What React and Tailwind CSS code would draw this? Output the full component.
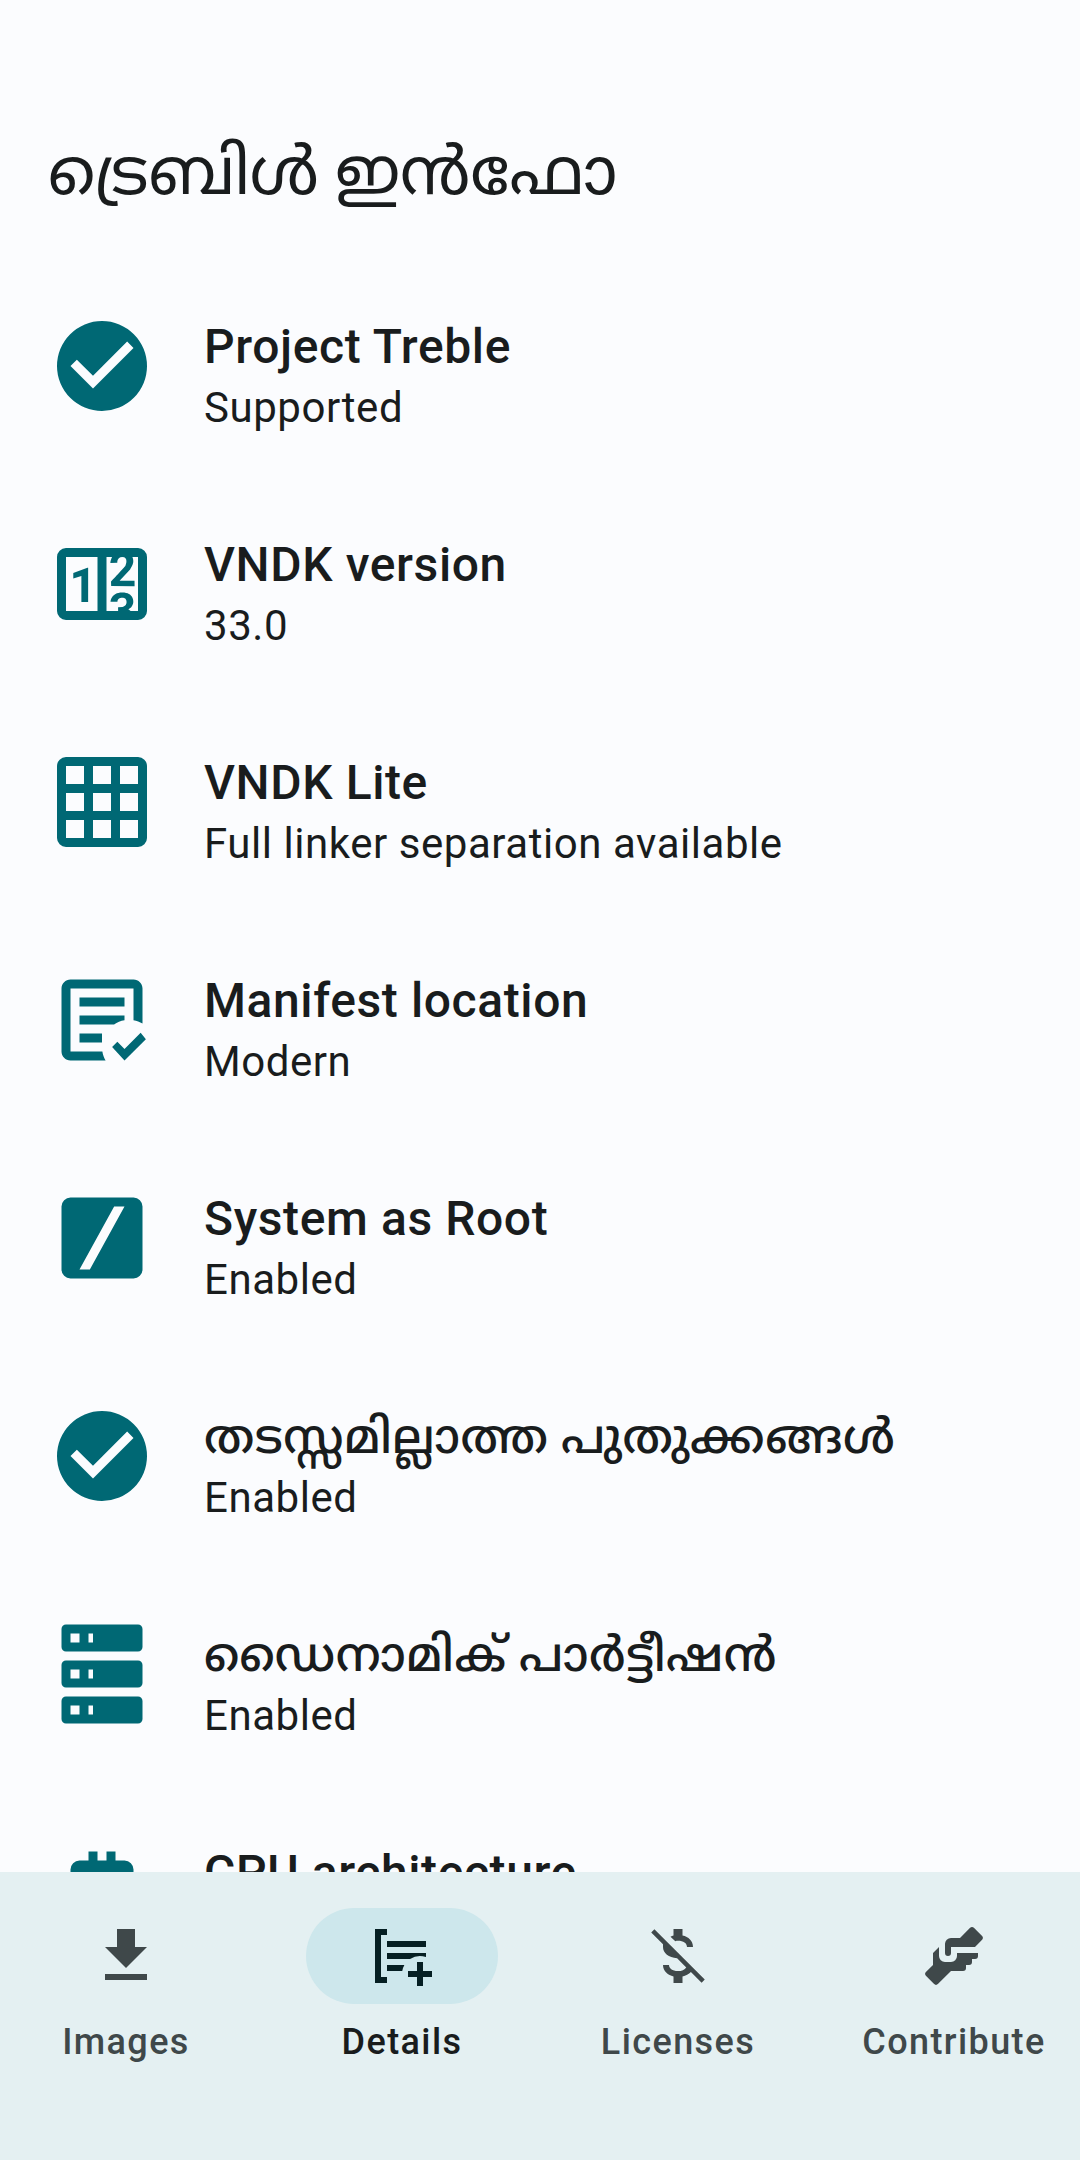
const COUNTER =
  'M4,4H20A2,2 0 0,1 22,6V18A2,2 0 0,1 20,20H4A2,2 0 0,1 2,18V6A2,2 0 0,1 4,4M4,6V18H11V6H4M20,18V6H18.76C19,6.54 18.95,7.07 18.95,7.13C18.88,7.8 18.41,8.5 18.24,8.75L15.91,11.3L19.23,11.28L19.24,12.5L14.04,12.47L14,11.47C14,11.47 17.05,8.24 17.2,7.95C17.34,7.67 17.91,6 16.5,6C15.27,6.05 15.41,7.3 15.41,7.3L13.87,7.31C13.87,7.31 13.88,6.65 14.25,6H13V18H15.58L15.57,17.14L16.54,17.13C16.54,17.13 17.45,16.97 17.46,16.08C17.5,15.08 16.65,15.08 16.5,15.08C16.37,15.08 15.43,15.13 15.43,15.95H13.91C13.91,15.95 13.95,13.89 16.5,13.89C19.1,13.89 18.96,15.91 18.96,15.91C18.96,15.91 19,17.16 17.85,17.63L18.37,18H20M8.92,16H7.42V10.2L5.62,10.76V9.53L8.76,8.41H8.92V16Z';
const CHECK =
  'M12 2A10 10 0 1 0 12 22A10 10 0 1 0 12 2M10 17L5 12L6.41 10.59L10 14.17L17.59 6.58L19 8Z';
const GRID =
  'M4 2H20A2 2 0 0 1 22 4V20A2 2 0 0 1 20 22H4A2 2 0 0 1 2 20V4A2 2 0 0 1 4 2M4 4V8H8V4ZM10 4V8H14V4ZM16 4V8H20V4ZM4 10V14H8V10ZM10 10V14H14V10ZM16 10V14H20V10ZM4 16V20H8V16ZM10 16V20H14V16ZM16 16V20H20V16Z';
const MANIFEST =
  'M17 21L14.25 18L15.41 16.84L17 18.43L20.59 14.84L21.75 16.25L17 21M12.8 21H5C3.89 21 3 20.11 3 19V5C3 3.89 3.89 3 5 3H19C20.11 3 21 3.89 21 5V12.8C20.39 12.45 19.72 12.2 19 12.08V5H5V19H12.08C12.2 19.72 12.45 20.39 12.8 21M12 17H7V15H12M14.68 13H7V11H17V12.08C16.15 12.22 15.37 12.54 14.68 13M17 9H7V7H17';
const SLASH =
  'M5 3H19A2 2 0 0 1 21 5V19A2 2 0 0 1 19 21H5A2 2 0 0 1 3 19V5A2 2 0 0 1 5 3M7 19H9.3L17 5H14.7Z';
const SERVER =
  'M4,1H20A1,1 0 0,1 21,2V6A1,1 0 0,1 20,7H4A1,1 0 0,1 3,6V2A1,1 0 0,1 4,1M4,9H20A1,1 0 0,1 21,10V14A1,1 0 0,1 20,15H4A1,1 0 0,1 3,14V10A1,1 0 0,1 4,9M4,17H20A1,1 0 0,1 21,18V22A1,1 0 0,1 20,23H4A1,1 0 0,1 3,22V18A1,1 0 0,1 4,17M9,5H10V3H9V5M9,13H10V11H9V13M9,21H10V19H9V21M5,3V5H7V3H5M5,11V13H7V11H5M5,19V21H7V19H5Z';
const CHIP =
  'M9 3H11V5H13V3H15V5H17A2 2 0 0 1 19 7V9H21V11H19V13H21V15H19V17A2 2 0 0 1 17 19H15V21H13V19H11V21H9V19H7A2 2 0 0 1 5 17V15H3V13H5V11H3V9H5V7A2 2 0 0 1 7 5H9Z';

const DOWNLOAD = 'M5 20H19V18H5V20M19 9H15V3H9V9H5L12 16L19 9Z';
const DETAILS =
  'M3 3H7V5H5V19H7V21H3ZM7 7H20V9H7ZM7 11H20V12.34A6 6 0 0 0 14.68 13H7ZM7 15H12.8A6 6 0 0 0 12.08 17H7ZM17 14H19V17H22V19H19V22H17V19H14V17H17Z';
const MONEY_OFF =
  'M10.5 3H13.5V5.2C15.5 5.6 17 7 17 9H15C15 7.7 13.8 6.9 12 6.9C11.7 6.9 11.4 6.95 11.1 7.05L9.5 5.6C9.8 5.4 10.2 5.3 10.5 5.2ZM4.13 3.08L3.08 4.13L7 8.05V9C7 11.15 8.9 12.4 11.7 12.75L14.75 15.8C14.2 16.6 13.3 17 12 17C10 17 9 16.1 9 15H7C7 17.1 8.7 18.4 10.5 18.8V21H13.5V18.8C14.6 18.6 15.6 18.1 16.3 17.35L19.87 20.92L20.92 19.87Z';
const HANDS =
  'M11 6H14L17.29 2.7A1 1 0 0 1 18.71 2.7L21.29 5.29A1 1 0 0 1 21.29 6.7L19 9H11V11A1 1 0 0 1 10 12A1 1 0 0 1 9 11V8A2 2 0 0 1 11 6M5 11V15L2.71 17.29A1 1 0 0 0 2.71 18.7L5.29 21.29A1 1 0 0 0 6.71 21.29L11 17H15A1 1 0 0 0 16 16V15H17A1 1 0 0 0 18 14V13H19A1 1 0 0 0 20 12V11H13V12A2 2 0 0 1 11 14H9A2 2 0 0 1 7 12V9L5 11Z';

const rows = [
  { icon: CHECK, title: 'Project Treble', value: 'Supported' },
  { icon: COUNTER, title: 'VNDK version', value: '33.0' },
  { icon: GRID, title: 'VNDK Lite', value: 'Full linker separation available' },
  { icon: MANIFEST, title: 'Manifest location', value: 'Modern' },
  { icon: SLASH, title: 'System as Root', value: 'Enabled' },
  { icon: CHECK, title: 'തടസ്സമില്ലാത്ത പുതുക്കങ്ങൾ', value: 'Enabled' },
  { icon: SERVER, title: 'ഡൈനാമിക് പാർട്ടീഷൻ', value: 'Enabled' },
  { icon: CHIP, title: 'CPU architecture', value: '' },
];

const tabs = [
  { icon: DOWNLOAD, label: 'Images' },
  { icon: DETAILS, label: 'Details', active: true },
  { icon: MONEY_OFF, label: 'Licenses' },
  { icon: HANDS, label: 'Contribute' },
];

function Icon({ d, className }) {
  return (
    <svg viewBox="0 0 24 24" className={className} fill="currentColor" fillRule="evenodd" aria-hidden="true">
      <path d={d} />
    </svg>
  );
}

function Row({ icon, title, value }) {
  return (
    <li className="flex h-[218px] shrink-0 items-start gap-12 px-12">
      <Icon d={icon} className="size-[108px] shrink-0 text-[#006874]" />
      <div className="pt-1.5 whitespace-nowrap">
        <h2 className="h-[57px] text-[48px] leading-[57px] font-medium tracking-[0.6px]">{title}</h2>
        <p className="mt-2 text-[42px] leading-[49px] tracking-[0.55px]">{value}</p>
      </div>
    </li>
  );
}

function Tab({ icon, label, active }) {
  return (
    <button className={active ? 'flex w-[252px] flex-col items-center text-[#191c1d]' : 'flex w-[252px] flex-col items-center text-[#3f484a]'}>
      <span className={active ? 'flex h-24 w-48 items-center justify-center rounded-full bg-[#cde7ec] text-[#051f23]' : 'flex h-24 w-48 items-center justify-center'}>
        <Icon d={icon} className="size-[72px]" />
      </span>
      <span className="mt-[17px] text-[36px] leading-[42px] font-medium tracking-[1.4px] whitespace-nowrap">{label}</span>
    </button>
  );
}

export default function App() {
  return (
    <div className="flex h-[2160px] w-[1080px] flex-col overflow-hidden bg-[#fbfcfe] font-['Roboto','Noto_Sans_Malayalam','Noto_Sans',sans-serif] text-[#191c1d]">
      <header className="h-[312px] shrink-0 px-12 pt-[133px]">
        <h1 className="text-[66px] leading-[77px] whitespace-nowrap">ട്രെബിൾ ഇൻഫോ</h1>
      </header>
      <ul className="flex min-h-0 flex-1 flex-col overflow-hidden">
        {rows.map((row) => (
          <Row key={row.title} {...row} />
        ))}
      </ul>
      <nav className="flex h-[288px] shrink-0 items-start gap-6 bg-[#e4f0f2] pt-9">
        {tabs.map((tab) => (
          <Tab key={tab.label} {...tab} />
        ))}
      </nav>
    </div>
  );
}
